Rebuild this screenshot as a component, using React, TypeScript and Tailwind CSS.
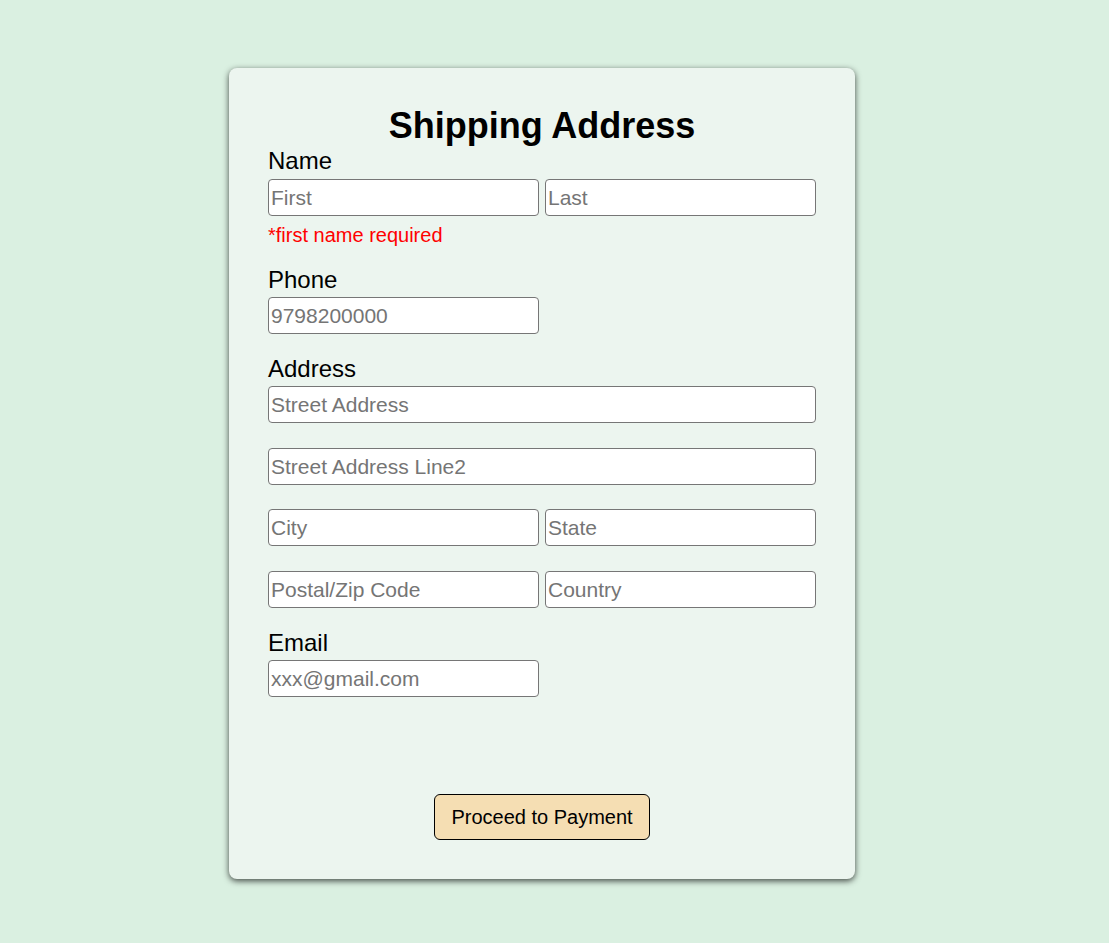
export default function App() {
  const input =
    'h-[37px] w-full rounded-[4px] border border-[#767676] bg-white px-[2px] text-[21px] text-black placeholder:text-[#757575] outline-none'

  return (
    <div className="min-h-[943px] w-full bg-[#daf0e1] pt-[68px] font-['Liberation_Sans',Arial,sans-serif]">
      <div className="ml-[229px] w-[626px] rounded-[8px] bg-[#ecf5ef] px-[39px] pb-[39px] pt-[38px] shadow-[0_2px_6px_rgba(0,0,0,0.7)]">
        <h1 className="text-center text-[36px] font-bold leading-[40px] text-black">Shipping Address</h1>

        {/* Name */}
        <label className="mt-[1px] block text-[24px] leading-[28px] text-black">Name</label>
        <div className="mt-[4px] flex gap-[6px]">
          <input className={input} placeholder="First" />
          <input className={input} placeholder="Last" />
        </div>
        <p className="mt-[7px] text-[20px] leading-[24px] text-[#ff0000]">*first name required</p>

        {/* Phone */}
        <label className="mt-[19px] block text-[24px] leading-[28px] text-black">Phone</label>
        <div className="mt-[3px] w-[271px]">
          <input className={input} placeholder="9798200000" />
        </div>

        {/* Address */}
        <label className="mt-[21px] block text-[24px] leading-[28px] text-black">Address</label>
        <div className="mt-[3px]">
          <input className={input} placeholder="Street Address" />
        </div>
        <div className="mt-[25px]">
          <input className={input} placeholder="Street Address Line2" />
        </div>
        <div className="mt-[24px] flex gap-[6px]">
          <input className={input} placeholder="City" />
          <input className={input} placeholder="State" />
        </div>
        <div className="mt-[25px] flex gap-[6px]">
          <input className={input} placeholder="Postal/Zip Code" />
          <input className={input} placeholder="Country" />
        </div>

        {/* Email */}
        <label className="mt-[21px] block text-[24px] leading-[28px] text-black">Email</label>
        <div className="mt-[3px] w-[271px]">
          <input className={input} placeholder="xxx@gmail.com" />
        </div>

        <div className="mt-[97px] flex justify-center">
          <button className="h-[46px] w-[216px] rounded-[6px] border border-black bg-[#f5deb3] text-[20px] text-black">
            Proceed to Payment
          </button>
        </div>
      </div>
    </div>
  )
}
